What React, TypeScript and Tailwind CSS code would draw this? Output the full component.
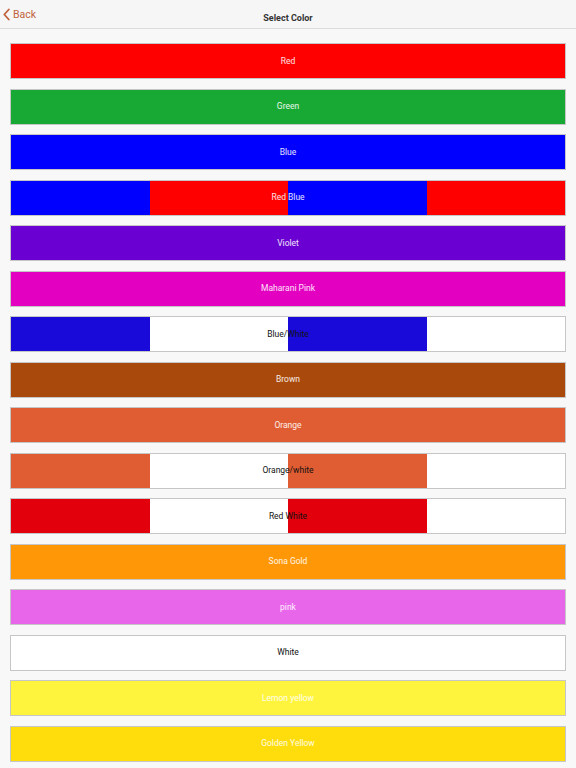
import React from 'react';

type Swatch = {
  label: string;
  // one colour fills the bar, two colours alternate in quarters
  colors: [string] | [string, string];
  dark?: boolean;
};

const SWATCHES: Swatch[] = [
  { label: 'Red', colors: ['#fe0000'] },
  { label: 'Green', colors: ['#17a933'] },
  { label: 'Blue', colors: ['#0000fe'] },
  { label: 'Red Blue', colors: ['#0000fe', '#fe0000'] },
  { label: 'Violet', colors: ['#6a00d1'] },
  { label: 'Maharani Pink', colors: ['#e300c1'] },
  { label: 'Blue/White', colors: ['#1a0ad9', '#ffffff'], dark: true },
  { label: 'Brown', colors: ['#a9490b'] },
  { label: 'Orange', colors: ['#e05c32'] },
  { label: 'Orange/white', colors: ['#e05c32', '#ffffff'], dark: true },
  { label: 'Red White', colors: ['#e2000d', '#ffffff'], dark: true },
  { label: 'Sona Gold', colors: ['#ff9707'] },
  { label: 'pink', colors: ['#e866e9'] },
  { label: 'White', colors: ['#ffffff'], dark: true },
  { label: 'Lemon yellow', colors: ['#fff43d'] },
  { label: 'Golden Yellow', colors: ['#ffdc0b'] },
];

const ColorBar: React.FC<{ swatch: Swatch }> = ({ swatch }) => {
  const [a, b] = swatch.colors;
  return (
    <button
      type="button"
      className="relative flex h-9 w-full overflow-hidden border border-black/20"
    >
      {b ? (
        <div className="flex h-full w-full">
          <div className="h-full flex-1" style={{ backgroundColor: a }} />
          <div className="h-full flex-1" style={{ backgroundColor: b }} />
          <div className="h-full flex-1" style={{ backgroundColor: a }} />
          <div className="h-full flex-1" style={{ backgroundColor: b }} />
        </div>
      ) : (
        <div className="h-full w-full" style={{ backgroundColor: a }} />
      )}
      <span
        className={`absolute inset-0 flex items-center justify-center text-[8.5px] ${
          swatch.dark ? 'text-[#111]' : 'text-white/90'
        }`}
      >
        {swatch.label}
      </span>
    </button>
  );
};

export default function App() {
  return (
    <div className="min-h-[768px] w-[576px] bg-[#f8f8f8] font-['Roboto','Liberation_Sans',sans-serif]">
      <header className="relative flex h-[29px] items-center justify-center border-b border-[#dcdcdc] bg-[#f6f6f6]">
        <button
          type="button"
          className="absolute left-[3px] top-[7px] flex items-center gap-[3px] text-[10.5px] text-[#c0623c]"
        >
          <svg width="7" height="13" viewBox="0 0 7 13" fill="none">
            <path d="M5.8 1.5 1.3 6.5l4.5 5" stroke="#c0623c" strokeWidth="1.8" strokeLinecap="round" strokeLinejoin="round" />
          </svg>
          <span>Back</span>
        </button>
        <h1 className="mt-[9px] text-[9px] font-bold text-[#333]">Select Color</h1>
      </header>

      <div className="flex flex-col gap-[9.5px] px-[10px] pt-[14px]">
        {SWATCHES.map((s) => (
          <ColorBar key={s.label} swatch={s} />
        ))}
      </div>
    </div>
  );
}
